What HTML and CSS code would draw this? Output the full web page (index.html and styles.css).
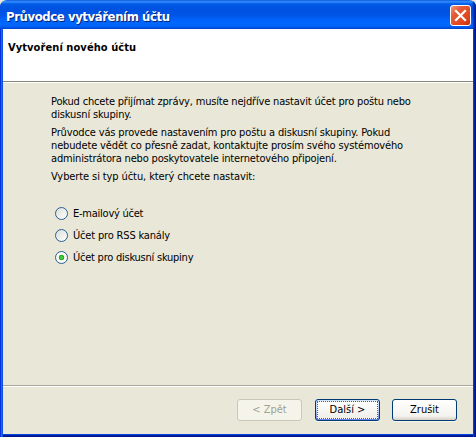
FILE: index.html
```html
<!DOCTYPE html>
<html lang="cs">
<head>
<meta charset="utf-8">
<title>Průvodce vytvářením účtu</title>
<link rel="stylesheet" href="styles.css">
</head>
<body>
<div class="window">
  <div class="titlebar">
    <span class="title">Průvodce vytvářením účtu</span>
    <svg class="close" width="21" height="21" viewBox="0 0 21 21">
      <defs><linearGradient id="red" x1="0" y1="0" x2="1" y2="1"><stop offset="0" stop-color="#f0a088"/><stop offset=".3" stop-color="#e55c38"/><stop offset=".75" stop-color="#e0431b"/><stop offset="1" stop-color="#b8300c"/></linearGradient></defs>
      <rect x=".5" y=".5" width="20" height="20" rx="2.5" fill="url(#red)" stroke="#fff"/>
      <path d="M6 6l9 9M15 6l-9 9" stroke="#fff" stroke-width="2.2" stroke-linecap="square"/>
    </svg>
  </div>
  <div class="client">
    <div class="header"><span class="heading">Vytvoření nového účtu</span></div>
    <div class="content">
      <p><span class="l1">Pokud chcete přijímat zprávy, musíte nejdříve nastavit účet pro poštu nebo</span><br><span class="l2">diskusní skupiny.</span></p>
      <p><span class="l3">Průvodce vás provede nastavením pro poštu a diskusní skupiny. Pokud</span><br><span class="l4">nebudete vědět co přesně zadat, kontaktujte prosím svého systémového</span><br><span class="l5">administrátora nebo poskytovatele internetového připojení.</span></p>
      <p><span class="l6">Vyberte si typ účtu, který chcete nastavit:</span></p>
      <div class="options">
        <div class="option"><i class="radio"></i><span class="o1">E-mailový účet</span></div>
        <div class="option"><i class="radio"></i><span class="o2">Účet pro RSS kanály</span></div>
        <div class="option"><i class="radio checked"></i><span class="o3">Účet pro diskusní skupiny</span></div>
      </div>
    </div>
    <div class="footer">
      <div class="button disabled">&lt; Zpět</div>
      <div class="button default"><span class="focus">Další &gt;</span></div>
      <div class="button">Zrušit</div>
    </div>
  </div>
</div>
</body>
</html>
```
FILE: styles.css
```css
* { box-sizing: border-box; }
body {
  margin: 0;
  background: #ece9d8;
  color: #000;
  font: 11px/13px "DejaVu Sans Condensed", "DejaVu Sans", sans-serif;
  font-stretch: condensed;
  white-space: nowrap;
  overflow: hidden;
}
.window {
  width: 476px;
  height: 437px;
  display: flex;
  flex-direction: column;
  border-radius: 7px 7px 0 0;
  background: linear-gradient(90deg, #0831d9 0 1px, #166aee 1px 2px, #0855dd 2px 3px, transparent 3px 473px, #0144d0 473px 474px, #001ea0 474px 475px, #00138c 475px),
    linear-gradient(0deg, #00138c 0 1px, #001ea0 1px 2px, #0441d8 2px 3px, transparent 3px);
  overflow: hidden;
}
.titlebar {
  height: 29px;
  padding: 3px 5px 0 6px;
  display: flex;
  justify-content: space-between;
  background: linear-gradient(90deg, transparent 472px, #0030b8 474px, #00138c 476px),
    linear-gradient(180deg, #0a5ae0 0, #3c93ff 2px, #0a68ee 3px, #0058e4 5px, #0052e0 9px, #0055e6 15px, #0063fb 20px, #0068ff 25px, #005df0 27px, #0040c8 29px);
}
.title {
  padding-top: 4px;
  font-size: 13px;
  line-height: 19px;
  font-weight: bold;
  letter-spacing: -0.41px;
  color: #fff;
  text-shadow: 1px 1px 0 #06246f;
}
.close { margin-top: 2px; }
.client {
  flex: 1;
  margin: 0 3px 3px;
  display: flex;
  flex-direction: column;
  background: #e9e7d7;
}
.header {
  height: 54px;
  padding: 12px 5px;
  background: linear-gradient(#fff 52px, #85857c 52px 53px, #fff 53px);
}
.heading { font-weight: bold; letter-spacing: 0.08px; }
.content { flex: 1; padding: 12px 0 0 48px; }
p { margin: 0 0 5px; }
.l1 { letter-spacing: -0.178px; }
.l2 { letter-spacing: -0.13px; }
.l3, .l4 { letter-spacing: -0.145px; }
.l5 { letter-spacing: -0.17px; }
.l6 { letter-spacing: -0.1px; }
.o1 { letter-spacing: -0.24px; }
.o2 { letter-spacing: -0.17px; }
.o3 { letter-spacing: -0.24px; }
.options { padding: 19px 0 0 4px; }
.option { height: 22px; display: flex; align-items: flex-start; gap: 5px; }
.radio {
  width: 13px;
  height: 13px;
  border: 1px solid #2b6090;
  border-radius: 50%;
  background: linear-gradient(135deg, #dcdcd7, #fff);
}
.checked { background: radial-gradient(circle, #45cf43 0 1px, #22a121 2.4px, #f8f8f4 3.1px); }
.footer {
  height: 49px;
  padding: 13px 16px 0 0;
  display: flex;
  justify-content: flex-end;
  gap: 12px;
  border-top: 1px solid #aca899;
  box-shadow: inset 0 1px #fff;
}
.button {
  width: 65px;
  height: 22px;
  border: 1px solid #003c74;
  border-radius: 3px;
  background: linear-gradient(#fff, #f4f3ee 80%, #d6d0c5);
  box-shadow: 0 1px 0 #f6f5ee;
  text-align: center;
  line-height: 20px;
}
.disabled { border-color: #c9c7ba; background: #f5f4ea; box-shadow: none; color: #a1a192; margin-right: 1px; }
.default {
  padding: 1px;
  background: linear-gradient(#cee7ff, #bcd4f6 50%, #6982ee);
}
.focus {
  display: block;
  height: 18px;
  border: 1px dotted #51607c;
  background: linear-gradient(#fff, #efeee8);
  line-height: 16px;
}
```
